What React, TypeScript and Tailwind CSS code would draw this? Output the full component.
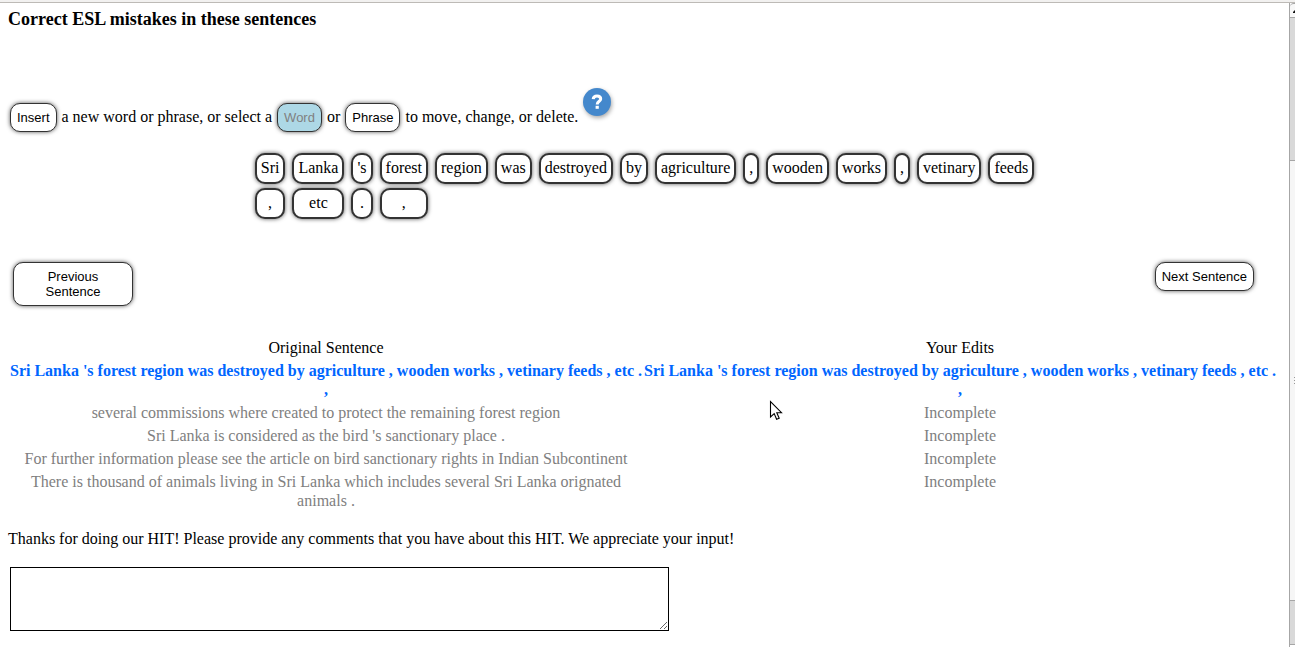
import { useState } from "react";

const SENTENCE =
  "Sri Lanka 's forest region was destroyed by agriculture , wooden works , vetinary feeds , etc . ,";

const PENDING = [
  "several commissions where created to protect the remaining forest region",
  "Sri Lanka is considered as the bird 's sanctionary place .",
  "For further information please see the article on bird sanctionary rights in Indian Subcontinent",
  "There is thousand of animals living in Sri Lanka which includes several Sri Lanka orignated animals .",
];

const BUTTON =
  "rounded-[10px] border border-[#333333] px-1.5 font-['Liberation_Sans',sans-serif] text-[13px] leading-[15px] shadow-[0_0_4px_#555555]";

function Scrollbar() {
  return (
    <div className="flex w-1.5 shrink-0 flex-col overflow-hidden border-l border-[#a6a6a6] bg-white" aria-hidden="true">
      <div className="flex h-[14px] items-center overflow-hidden rounded-tl-sm border-t border-[#a6a6a6] bg-[#f8f8f8]">
        <svg className="ml-[3px] shrink-0" width="8" height="5" viewBox="0 0 8 5">
          <path d="M0 5V4L4 0L8 4V5Z" fill="#111111" />
        </svg>
      </div>
      <div className="h-[143px] border-t border-[#a6a6a6] bg-[#d9d9d9]" />
      <div className="flex h-[440px] items-center border-t border-[#a6a6a6] bg-[#f6f6f6]">
        <div className="ml-1 flex w-2 shrink-0 flex-col gap-0.5">
          <span className="h-px bg-[#999999]" />
          <span className="h-px bg-[#999999]" />
          <span className="h-px bg-[#999999]" />
        </div>
      </div>
      <div className="h-[45px] border-y border-[#a6a6a6] bg-[#d9d9d9]" />
    </div>
  );
}

function SentenceCell() {
  const cut = SENTENCE.lastIndexOf(" ");
  return (
    <td className="py-px">
      <span className="whitespace-nowrap">{SENTENCE.slice(0, cut)}</span> {SENTENCE.slice(cut + 1)}
    </td>
  );
}

export default function App() {
  const [mode, setMode] = useState("word");
  const modeColor = (name: string) =>
    mode === name ? "bg-[#add8e6] text-[#808080]" : "bg-white text-black";

  return (
    <div className="relative flex min-h-screen flex-col bg-white font-['Liberation_Serif',serif] text-base leading-[19px] text-black">
      <div className="h-[3px] border-b border-[#bdbab6] bg-[#f2f1f0]" />
      <div className="flex flex-1">
        <main className="min-w-0 flex-1 px-2 pt-1">
          <h1 className="text-lg leading-6 font-bold">Correct ESL mistakes in these sentences</h1>

          <div className="mt-[57px] ml-0.5 flex h-11 items-end gap-[5px] leading-[30px] whitespace-nowrap">
            <button type="button" className={`h-[29px] bg-white ${BUTTON}`}>Insert</button>
            <span>a new word or phrase, or select a</span>
            <button type="button" onClick={() => setMode("word")} className={`h-[29px] ${BUTTON} ${modeColor("word")}`}>
              Word
            </button>
            <span>or</span>
            <button type="button" onClick={() => setMode("phrase")} className={`h-[29px] ${BUTTON} ${modeColor("phrase")}`}>
              Phrase
            </button>
            <span>to move, change, or delete.</span>
            <button
              type="button"
              aria-label="Help"
              className="size-7 self-start rounded-full bg-[#4488cc] text-center shadow-[1px_2px_4px_#aaaaaa]"
            >
              <svg width="28" height="28" viewBox="0 0 28 28" aria-hidden="true">
                <path d="M10.2 11.2C10.4 8.9 12 8 14 8C16.2 8 17.7 9.1 17.7 11C17.7 13.3 14.2 13.3 14.2 16.4" fill="none" stroke="white" strokeWidth="3" />
                <rect x="12.6" y="17.8" width="3.2" height="3" fill="white" />
              </svg>
            </button>
          </div>

          <div className="mx-auto mt-[21px] grid w-max grid-cols-[repeat(15,auto)] gap-x-[7px] gap-y-1">
            {SENTENCE.split(" ").map((word, i) => (
              <button
                type="button"
                key={i}
                className="h-[31px] rounded-[10px] border-2 border-[#333333] bg-white px-1 pb-0.5 leading-[25px] shadow-[0_0_4px_#555555]"
              >
                {word}
              </button>
            ))}
          </div>

          <div className="mt-[43px] flex items-start justify-between pr-[27px] pl-[5px]">
            <button type="button" className={`w-[120px] bg-white py-1.5 ${BUTTON}`}>
              <span className="mx-auto block w-16">Previous Sentence</span>
            </button>
            <button type="button" className={`h-[29px] bg-white ${BUTTON}`}>Next Sentence</button>
          </div>

          <div className="mt-[29px] pr-[3px]">
            <table className="w-full table-fixed border-separate border-spacing-0.5 text-center">
              <thead>
                <tr>
                  <th className="py-px font-normal">Original Sentence</th>
                  <th className="py-px font-normal">Your Edits</th>
                </tr>
              </thead>
              <tbody className="align-top text-[#808080]">
                <tr className="font-bold text-[#0066ff]">
                  <SentenceCell />
                  <SentenceCell />
                </tr>
                {PENDING.map((text) => (
                  <tr key={text}>
                    <td className="py-px">{text}</td>
                    <td className="py-px">Incomplete</td>
                  </tr>
                ))}
              </tbody>
            </table>
          </div>

          <label htmlFor="comments" className="mt-4 block">
            Thanks for doing our HIT! Please provide any comments that you have about this HIT. We appreciate your input!
          </label>
          <textarea
            id="comments"
            className="mt-[19px] ml-0.5 block h-16 w-[659px] max-w-full resize border border-black bg-white p-0.5"
          />
        </main>
        <Scrollbar />
      </div>

      <svg className="pointer-events-none absolute top-[400px] left-[769px]" width="14" height="21" viewBox="0 0 14 21" aria-hidden="true">
        <path d="M1.5 1.5V17L5.2 13.6L7.6 19.3L10.2 18.2L7.8 12.7H12.5Z" fill="white" stroke="black" strokeWidth="1.1" />
      </svg>
    </div>
  );
}
